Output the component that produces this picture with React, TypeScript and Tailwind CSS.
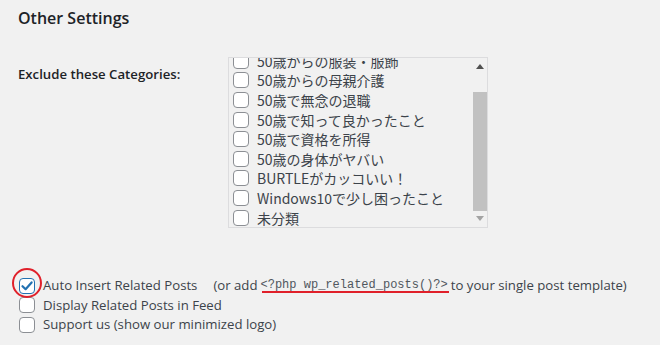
import React from "react";

const cats = [
  "50歳からの服装・服飾",
  "50歳からの母親介護",
  "50歳で無念の退職",
  "50歳で知って良かったこと",
  "50歳で資格を所得",
  "50歳の身体がヤバい",
  "BURTLEがカッコいい！",
  "Windows10で少し困ったこと",
  "未分類",
];

function Box({ checked = false }: { checked?: boolean }) {
  return (
    <span
      className={
        "flex h-[16px] w-[16px] shrink-0 items-center justify-center rounded-[4px] border bg-white " +
        (checked ? "border-[#2271b1]" : "border-[#8c8f94]")
      }
    >
      {checked && (
        <svg width="14" height="14" viewBox="0 0 14 14">
          <path d="M2.5 7.2 L5.6 10.2 L11.6 3.4" fill="none" stroke="#2271b1" strokeWidth="2.2" strokeLinecap="round" strokeLinejoin="round" />
        </svg>
      )}
    </span>
  );
}

export default function App() {
  return (
    <div
      className="relative h-[345px] w-[660px] overflow-hidden bg-[#f1f1f1] text-[#3c434a]"
      style={{ fontFamily: '"Open Sans", "Noto Sans", sans-serif' }}
    >
      <div className="pl-[18px] pt-[4px]">
        <h2 className="text-[16px] font-semibold leading-[28px] text-[#1d2327]">Other Settings</h2>
        <div className="mt-[25px] flex">
          <div className="w-[210px] whitespace-nowrap pt-[7px] text-[13.2px] font-semibold leading-[20px] text-[#1d2327]">
            Exclude these Categories:
          </div>
          <div className="flex h-[171px] w-[260px] overflow-hidden border border-[#dcdcde] bg-[#f1f1f1]">
            <div
              className="flex-1 overflow-hidden pl-[4px]"
              style={{ fontFamily: '"Noto Sans CJK JP", sans-serif' }}
            >
              <div className="-mt-[7px] flex flex-col">
                {cats.map((c) => (
                  <div key={c} className="flex h-[19.6px] shrink-0 items-center gap-[8px] whitespace-nowrap text-[14px] text-[#3c434a]">
                    <Box />
                    <span className="leading-none">{c}</span>
                  </div>
                ))}
              </div>
            </div>
            <div className="flex w-[15px] flex-col items-center bg-[#f1f1f1]">
              <div className="flex h-[17px] w-full items-center justify-center">
                <svg width="8" height="5" viewBox="0 0 8 5"><path d="M0 5 L4 0 L8 5 Z" fill="#505050" /></svg>
              </div>
              <div className="h-[17px]" />
              <div className="h-[119px] w-[14px] bg-[#c1c1c1]" />
              <div className="flex h-[14px] w-full items-center justify-center">
                <svg width="8" height="5" viewBox="0 0 8 5"><path d="M0 0 L4 5 L8 0 Z" fill="#a3a3a3" /></svg>
              </div>
            </div>
          </div>
        </div>
        <div className="mt-[48px] flex flex-col whitespace-nowrap text-[13.2px] leading-[19.5px]">
          <div className="flex items-center pl-[1px]">
            <Box checked />
            <span className="ml-[8px]">Auto Insert Related Posts</span>
            <span className="ml-[16px]">(or add </span>
            <code
              className="relative ml-[3px] text-[12px] leading-[19.5px] text-[#50575e]"
              style={{ fontFamily: '"Liberation Mono", monospace' }}
            >
              &lt;?php wp_related_posts()?&gt;
              <span className="absolute left-[1px] right-[-1px] top-[15px] h-[2px] bg-[#e0202a]" />
            </code>
            <span className="ml-[3px]">to your single post template)</span>
          </div>
          <div className="flex items-center gap-[8px] pl-[1px]">
            <Box />
            <span>Display Related Posts in Feed</span>
          </div>
          <div className="flex items-center gap-[8px] pl-[1px]">
            <Box />
            <span>Support us (show our minimized logo)</span>
          </div>
        </div>
      </div>
      <div className="absolute left-[12px] top-[268px] h-[30px] w-[30px] rounded-full border-2 border-[#e0202a]" />
    </div>
  );
}
